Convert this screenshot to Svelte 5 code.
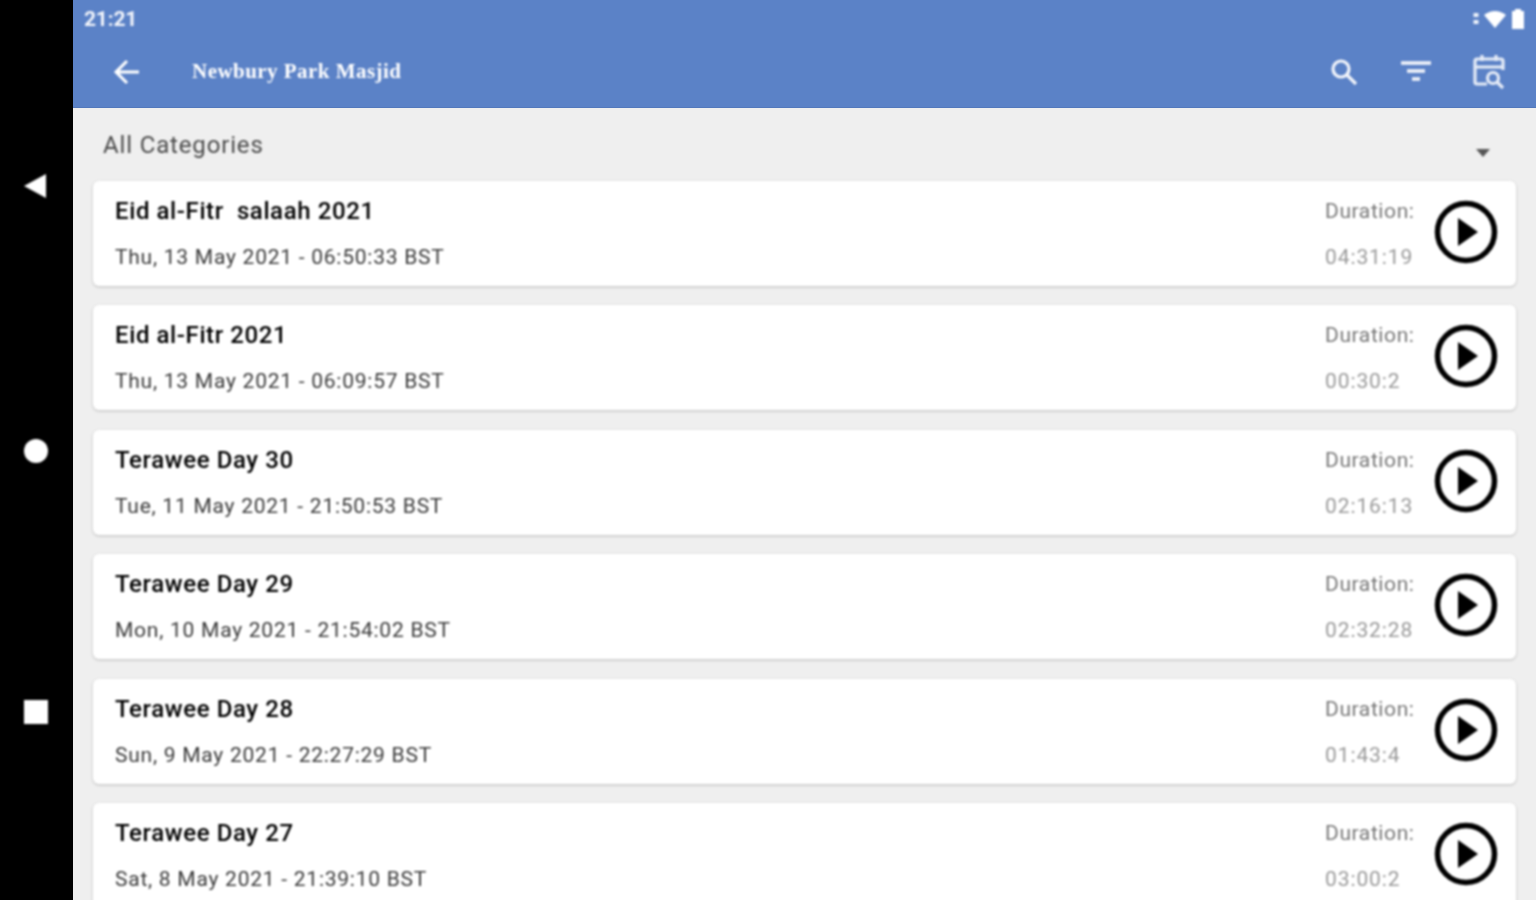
<script>
  const items = [
    { t: 'Eid al-Fitr  salaah 2021', d: 'Thu, 13 May 2021 - 06:50:33 BST', l: '04:31:19' },
    { t: 'Eid al-Fitr 2021', d: 'Thu, 13 May 2021 - 06:09:57 BST', l: '00:30:2' },
    { t: 'Terawee Day 30', d: 'Tue, 11 May 2021 - 21:50:53 BST', l: '02:16:13' },
    { t: 'Terawee Day 29', d: 'Mon, 10 May 2021 - 21:54:02 BST', l: '02:32:28' },
    { t: 'Terawee Day 28', d: 'Sun, 9 May 2021 - 22:27:29 BST', l: '01:43:4' },
    { t: 'Terawee Day 27', d: 'Sat, 8 May 2021 - 21:39:10 BST', l: '03:00:2' }
  ];
</script>

<div class="screen">
  <nav class="rail">
    <svg class="nav-back" width="24" height="28" viewBox="0 0 24 28"><path d="M1 14 L23 2 V26 Z" fill="#fff"/></svg>
    <span class="nav-home"></span>
    <span class="nav-stop"></span>
  </nav>
  <main class="main">
    <header class="appbar">
      <div class="status">
        <span class="time">21:21</span>
        <div class="status-icons">
          <svg width="6" height="14" viewBox="0 0 6 14"><rect x="0.5" y="1" width="5" height="4" fill="#eef2fa"/><rect x="0.5" y="8" width="5" height="4" fill="#eef2fa"/></svg>
          <svg width="24" height="18" viewBox="0 0 24 18"><path d="M1 5 Q12 -3 23 5 L12 18 Z" fill="#fff"/></svg>
          <svg width="14" height="22" viewBox="0 0 14 22"><path d="M4 1 H10 V3 H13 V21 H1 V3 H4 Z" fill="#fff"/></svg>
        </div>
      </div>
      <div class="toolbar">
        <svg width="28" height="28" viewBox="0 0 28 28" fill="none" stroke="#fff" stroke-width="3"><path d="M26 14 H4 M14 3 L3 14 L14 25"/></svg>
        <span class="title">Newbury Park Masjid</span>
        <div class="actions">
          <svg width="30" height="30" viewBox="0 0 30 30" fill="none" stroke="#f4f6fb" stroke-width="3.2"><circle cx="12" cy="12" r="8"/><path d="M18 18 L27 27"/></svg>
          <svg width="30" height="24" viewBox="0 0 30 24" fill="none" stroke="#f4f6fb" stroke-width="3.4"><path d="M0 3 H30 M6 11 H24 M11 19 H19"/></svg>
          <svg width="32" height="36" viewBox="0 0 32 36" fill="none" stroke="#e6ecf7" stroke-width="3.2"><path d="M14 30 H4 Q2 30 2 28 V7 Q2 5 4 5 H28 Q30 5 30 7 V16 M2 13 H30 M9 1 V7 M23 1 V7"/><circle cx="20" cy="24" r="5.5"/><path d="M24 28 L30 34"/></svg>
        </div>
      </div>
    </header>
    <div class="category">
      <span>All Categories</span>
      <svg width="14" height="8" viewBox="0 0 14 8"><path d="M0 0 H14 L7 8 Z" fill="#555"/></svg>
    </div>
    <div class="list">
      {#each items as it}
        <article class="card">
          <div class="info">
            <div class="name">{it.t}</div>
            <div class="date">{it.d}</div>
          </div>
          <div class="dur">
            <div>Duration:</div>
            <div>{it.l}</div>
          </div>
          <svg class="play" width="64" height="64" viewBox="0 0 64 64"><circle cx="32" cy="32" r="28.5" fill="none" stroke="#000" stroke-width="5.5"/><path d="M24 18 L44 32 L24 46 Z" fill="#000"/></svg>
        </article>
      {/each}
    </div>
  </main>
</div>

<style>
  :global(body) { margin: 0; background: #efefef; }
  .screen {
    width: 1536px; height: 900px; display: flex; overflow: hidden;
    font-family: Roboto, "Liberation Sans", sans-serif;
  }
  .rail {
    width: 73px; flex: none; background: #000; box-sizing: border-box;
    display: flex; flex-direction: column; align-items: center; padding-top: 172px;
  }
  .rail > * { filter: blur(0.8px); }
  .nav-back { margin-right: 3px; }
  .nav-home { width: 24px; height: 24px; border-radius: 50%; background: #fff; margin-top: 239px; margin-right: 1px; }
  .nav-stop { width: 24px; height: 24px; background: #fff; margin-top: 237px; margin-right: 1px; }
  .main { flex: 1; min-width: 0; background: #efefef; display: flex; flex-direction: column; }
  .appbar { height: 108px; flex: none; background: #5b82c7; color: #fff; box-shadow: inset 0 -1px 0 #5278bc; }
  .status {
    height: 36px; display: flex; justify-content: space-between; align-items: center;
    padding: 1px 11px 0 11px; box-sizing: border-box; filter: blur(0.8px);
  }
  .time { font-size: 21px; font-weight: 700; color: #f4f6fb; letter-spacing: -0.2px; }
  .status-icons { display: flex; align-items: center; gap: 4px; }
  .toolbar { height: 72px; display: flex; align-items: center; padding-left: 40px; filter: blur(0.8px); }
  .title {
    font-family: "Liberation Serif", serif; font-weight: 700; font-size: 21px;
    margin-left: 51px; letter-spacing: 0.46px; margin-bottom: 1px;
  }
  .actions { margin-left: auto; margin-right: 31px; display: flex; align-items: center; gap: 42px; }
  .category {
    height: 73px; flex: none; box-sizing: border-box; display: flex; justify-content: space-between;
    padding: 23px 46px 0 30px; font-size: 24px; color: #4a4a4a; letter-spacing: 0.85px; filter: blur(0.8px);
  }
  .category svg { margin-top: 18px; }
  .list { display: flex; flex-direction: column; gap: 19.4px; padding: 0 20px; }
  .card {
    height: 105px; flex: none; background: #fff; border-radius: 6px; box-sizing: border-box;
    box-shadow: 0 1px 3px rgba(0,0,0,.22); filter: blur(0.8px);
    display: flex; align-items: flex-start; padding: 0 18px 0 22px;
  }
  .info { flex: 1; }
  .name { font-size: 24px; font-weight: 500; color: #000; margin-top: 15px; line-height: 30px; letter-spacing: 0.6px; white-space: pre; }
  .date { font-size: 21px; color: #3a3a3a; margin-top: 18px; line-height: 26px; letter-spacing: 0.75px; }
  .dur { width: 109px; font-size: 21px; color: #777; letter-spacing: 0.6px; }
  .dur div { line-height: 26px; }
  .dur div:first-child { margin-top: 17px; }
  .dur div:last-child { margin-top: 20px; letter-spacing: 0.9px; color: #999; }
  .play { margin-top: 19px; flex: none; }
</style>
